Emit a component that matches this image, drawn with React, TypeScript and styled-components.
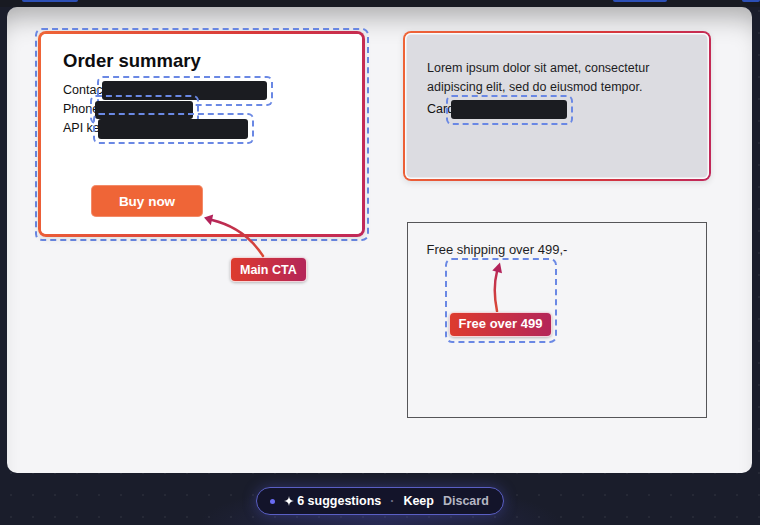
import React from 'react';
import styled, { createGlobalStyle } from 'styled-components';

const GlobalStyle = createGlobalStyle`
  html, body {
    margin: 0;
    padding: 0;
    height: 525px;
    overflow: hidden;
  }
  body {
    background-color: #1a1d2b;
    background-image:
      radial-gradient(ellipse 260px 60px at 50% 100%, rgba(70, 70, 170, 0.28), transparent 70%),
      radial-gradient(circle, rgba(255, 255, 255, 0.05) 1px, transparent 1.6px);
    background-size: 100% 100%, 22px 22px;
    font-family: 'Liberation Sans', Arial, sans-serif;
    color: #1d1d1f;
  }
`;

const dashed = '#6a88e4';

const Screen = styled.div`
  width: 760px;
  height: 525px;
  display: flex;
  flex-direction: column;
`;

const TopStrip = styled.div`
  height: 7px;
  display: flex;
  align-items: flex-start;
  background: #181a22;
`;

const StripTab = styled.div<{ $left: number; $width: number }>`
  margin-left: ${({ $left }) => $left}px;
  width: ${({ $width }) => $width}px;
  height: 2px;
  border-radius: 0 0 2px 2px;
  background: #2c4fb5;
`;

const Panel = styled.main`
  margin: 0 8px 0 7px;
  height: 466px;
  box-sizing: border-box;
  padding: 20.5px 0 0 27.5px;
  border-radius: 10px;
  background: #f5f5f7;
  box-shadow: inset 0 24px 26px -14px rgba(0, 0, 0, 0.3);
  display: grid;
  grid-template-columns: 334px 308px;
  column-gap: 34.5px;
  align-items: start;
`;

const Column = styled.div`
  display: flex;
  flex-direction: column;
  align-items: flex-start;
`;

const SelectionWrap = styled.div`
  padding: 1.5px;
  border: 2px dashed ${dashed};
  border-radius: 7px;
`;

const GradientCard = styled.section<{ $fill: string; $border: number }>`
  box-sizing: border-box;
  border: ${({ $border }) => $border}px solid transparent;
  border-radius: 8px;
  background:
    linear-gradient(${({ $fill }) => $fill}, ${({ $fill }) => $fill}) padding-box,
    linear-gradient(100deg, #ef6537 0%, #d8393a 60%, #c0285a 100%) border-box;
  box-shadow:
    inset 0 0 0 1.5px rgba(255, 255, 255, 0.85),
    0 2px 6px rgba(0, 0, 0, 0.1);
`;

const OrderCard = styled(GradientCard)`
  width: 327px;
  height: 206px;
  padding: 16px 22px 0;
  display: flex;
  flex-direction: column;
  align-items: flex-start;
`;

const Heading = styled.h2`
  margin: 0 0 9px;
  font-size: 18.5px;
  line-height: 22px;
  font-weight: 700;
  color: #0d0d0f;
`;

const FieldRow = styled.div`
  display: flex;
  align-items: center;
  height: 19px;
  font-size: 12.5px;
  line-height: 19px;
  color: #111;
  white-space: nowrap;
`;

const Redacted = styled.span<{ $width: number; $height: number; $shift: number }>`
  position: relative;
  display: inline-block;
  width: ${({ $width }) => $width}px;
  height: ${({ $height }) => $height}px;
  margin-left: ${({ $shift }) => $shift}px;
  border-radius: 3px;
  background: #1b1c21;

  &::after {
    content: '';
    position: absolute;
    inset: -5.5px;
    border: 2px dashed ${dashed};
    border-radius: 6px;
  }
`;

const BuyButton = styled.button`
  margin: 47px 0 0 28px;
  width: 112px;
  height: 32px;
  border: 0;
  border-radius: 5px;
  background: #ef6537;
  color: #fff;
  font-family: inherit;
  font-size: 13.5px;
  font-weight: 700;
  box-shadow: inset 0 0 0 1px rgba(255, 255, 255, 0.25);
`;

const Callout = styled.div`
  position: relative;
  margin: 16.5px 0 0 195.5px;
`;

const Badge = styled.div<{ $size: number }>`
  display: inline-flex;
  align-items: center;
  height: 25px;
  box-sizing: border-box;
  padding: 0 9px;
  border: 1px solid rgba(255, 255, 255, 0.8);
  border-radius: 5px;
  background: linear-gradient(90deg, #dd3b2d, #b42659);
  color: #fff;
  font-size: ${({ $size }) => $size}px;
  font-weight: 700;
  white-space: nowrap;
  box-shadow: 0 1px 3px rgba(0, 0, 0, 0.25);
`;

const CtaArrow = styled.svg`
  position: absolute;
  left: -35.5px;
  top: -47px;
  overflow: visible;
`;

const InfoCard = styled(GradientCard)`
  margin-top: 3.5px;
  width: 308px;
  height: 150px;
  padding: 26px 22px 0;
  font-size: 12.5px;
  line-height: 19px;
  color: #1d1d1f;
`;

const Paragraph = styled.p`
  margin: 0;
`;

const CardRow = styled(FieldRow)`
  margin-top: 3px;
`;

const ShippingBox = styled.div`
  margin: 41px 0 0 4px;
  width: 300px;
  height: 196px;
  box-sizing: border-box;
  border: 1.5px solid #555558;
  padding: 19px 18.5px 0;
  font-size: 13px;
  line-height: 16px;
  color: #1d1d1f;
`;

const TargetGroup = styled.div`
  margin-left: 18px;
  width: 112px;
  height: 85px;
  box-sizing: border-box;
  border: 2px dashed ${dashed};
  border-radius: 7px;
  display: flex;
  flex-direction: column;
  align-items: center;
`;

const Footer = styled.footer`
  flex: 1;
  display: flex;
  justify-content: center;
  padding-top: 14px;
`;

const SuggestionPill = styled.div`
  display: flex;
  align-items: center;
  height: 28px;
  box-sizing: border-box;
  padding: 0 14px 0 13px;
  border: 1px solid #5a5fc4;
  border-radius: 14px;
  background: #13142a;
  box-shadow: 0 0 14px rgba(88, 92, 220, 0.35);
  color: #fff;
  font-size: 12.5px;
  font-weight: 700;
  white-space: nowrap;
`;

const Dot = styled.span`
  width: 5px;
  height: 5px;
  border-radius: 50%;
  background: #6a6cf2;
  margin-right: 8.5px;
`;

const Sep = styled.span`
  margin: 0 9px 0 9px;
  color: #6d6f85;
`;

const PillAction = styled.span<{ $muted?: boolean }>`
  color: ${({ $muted }) => ($muted ? '#b5b6c2' : '#fff')};
  margin-right: ${({ $muted }) => ($muted ? 0 : 9)}px;
`;

function Sparkle() {
  return (
    <svg width="10" height="10" viewBox="0 0 10 10" style={{ marginRight: 3.5 }}>
      <path d="M5 0 C5.6 3.4 6.6 4.4 10 5 C6.6 5.6 5.6 6.6 5 10 C4.4 6.6 3.4 5.6 0 5 C3.4 4.4 4.4 3.4 5 0 Z" fill="#fff" />
    </svg>
  );
}

export default function App() {
  return (
    <>
      <GlobalStyle />
      <Screen>
        <TopStrip>
          <StripTab $left={22} $width={56} />
          <StripTab $left={535} $width={54} />
          <StripTab $left={75} $width={18} />
        </TopStrip>

        <Panel>
          <Column>
            <SelectionWrap>
              <OrderCard $fill="#ffffff" $border={3}>
                <Heading>Order summary</Heading>
                <FieldRow>
                  Contact
                  <Redacted $width={165} $height={19} $shift={-4} />
                </FieldRow>
                <FieldRow>
                  Phone
                  <Redacted $width={98} $height={18} $shift={-4} />
                </FieldRow>
                <FieldRow>
                  API key
                  <Redacted $width={150} $height={20} $shift={-8} />
                </FieldRow>
                <BuyButton type="button">Buy now</BuyButton>
              </OrderCard>
            </SelectionWrap>

            <Callout>
              <CtaArrow width="80" height="52" viewBox="0 0 80 52">
                <defs>
                  <linearGradient id="ctaArrow" gradientUnits="userSpaceOnUse" x1="68" y1="46" x2="12" y2="8">
                    <stop offset="0" stopColor="#dc4a35" />
                    <stop offset="1" stopColor="#b3235a" />
                  </linearGradient>
                </defs>
                <path d="M68 46 Q50 18 17 10" fill="none" stroke="url(#ctaArrow)" strokeWidth="2.5" strokeLinecap="round" />
                <path d="M9 7.5 L18.2 4.6 L15.8 15.2 Z" fill="#b3235a" />
              </CtaArrow>
              <Badge $size={12.5}>Main CTA</Badge>
            </Callout>
          </Column>

          <Column>
            <InfoCard $fill="#dcdce1" $border={2}>
              <Paragraph>
                Lorem ipsum dolor sit amet, consectetur
                <br />
                adipiscing elit, sed do eiusmod tempor.
              </Paragraph>
              <CardRow>
                Card
                <Redacted $width={116} $height={19} $shift={-3} />
              </CardRow>
            </InfoCard>

            <ShippingBox>
              Free shipping over 499,-
              <TargetGroup>
                <svg width="108" height="51.5" viewBox="0 0 108 51.5">
                  <defs>
                    <linearGradient id="freeArrow" gradientUnits="userSpaceOnUse" x1="50" y1="51" x2="53" y2="3">
                      <stop offset="0" stopColor="#dc4a35" />
                      <stop offset="1" stopColor="#b3235a" />
                    </linearGradient>
                  </defs>
                  <path d="M50 51 Q45.5 29 50 11.5" fill="none" stroke="url(#freeArrow)" strokeWidth="2.5" strokeLinecap="round" />
                  <path d="M53 2.5 L55 13.2 L45.3 10.4 Z" fill="#b3235a" />
                </svg>
                <Badge $size={13}>Free over 499</Badge>
              </TargetGroup>
            </ShippingBox>
          </Column>
        </Panel>

        <Footer>
          <SuggestionPill>
            <Dot />
            <Sparkle />
            6 suggestions
            <Sep>·</Sep>
            <PillAction>Keep</PillAction>
            <PillAction $muted>Discard</PillAction>
          </SuggestionPill>
        </Footer>
      </Screen>
    </>
  );
}
